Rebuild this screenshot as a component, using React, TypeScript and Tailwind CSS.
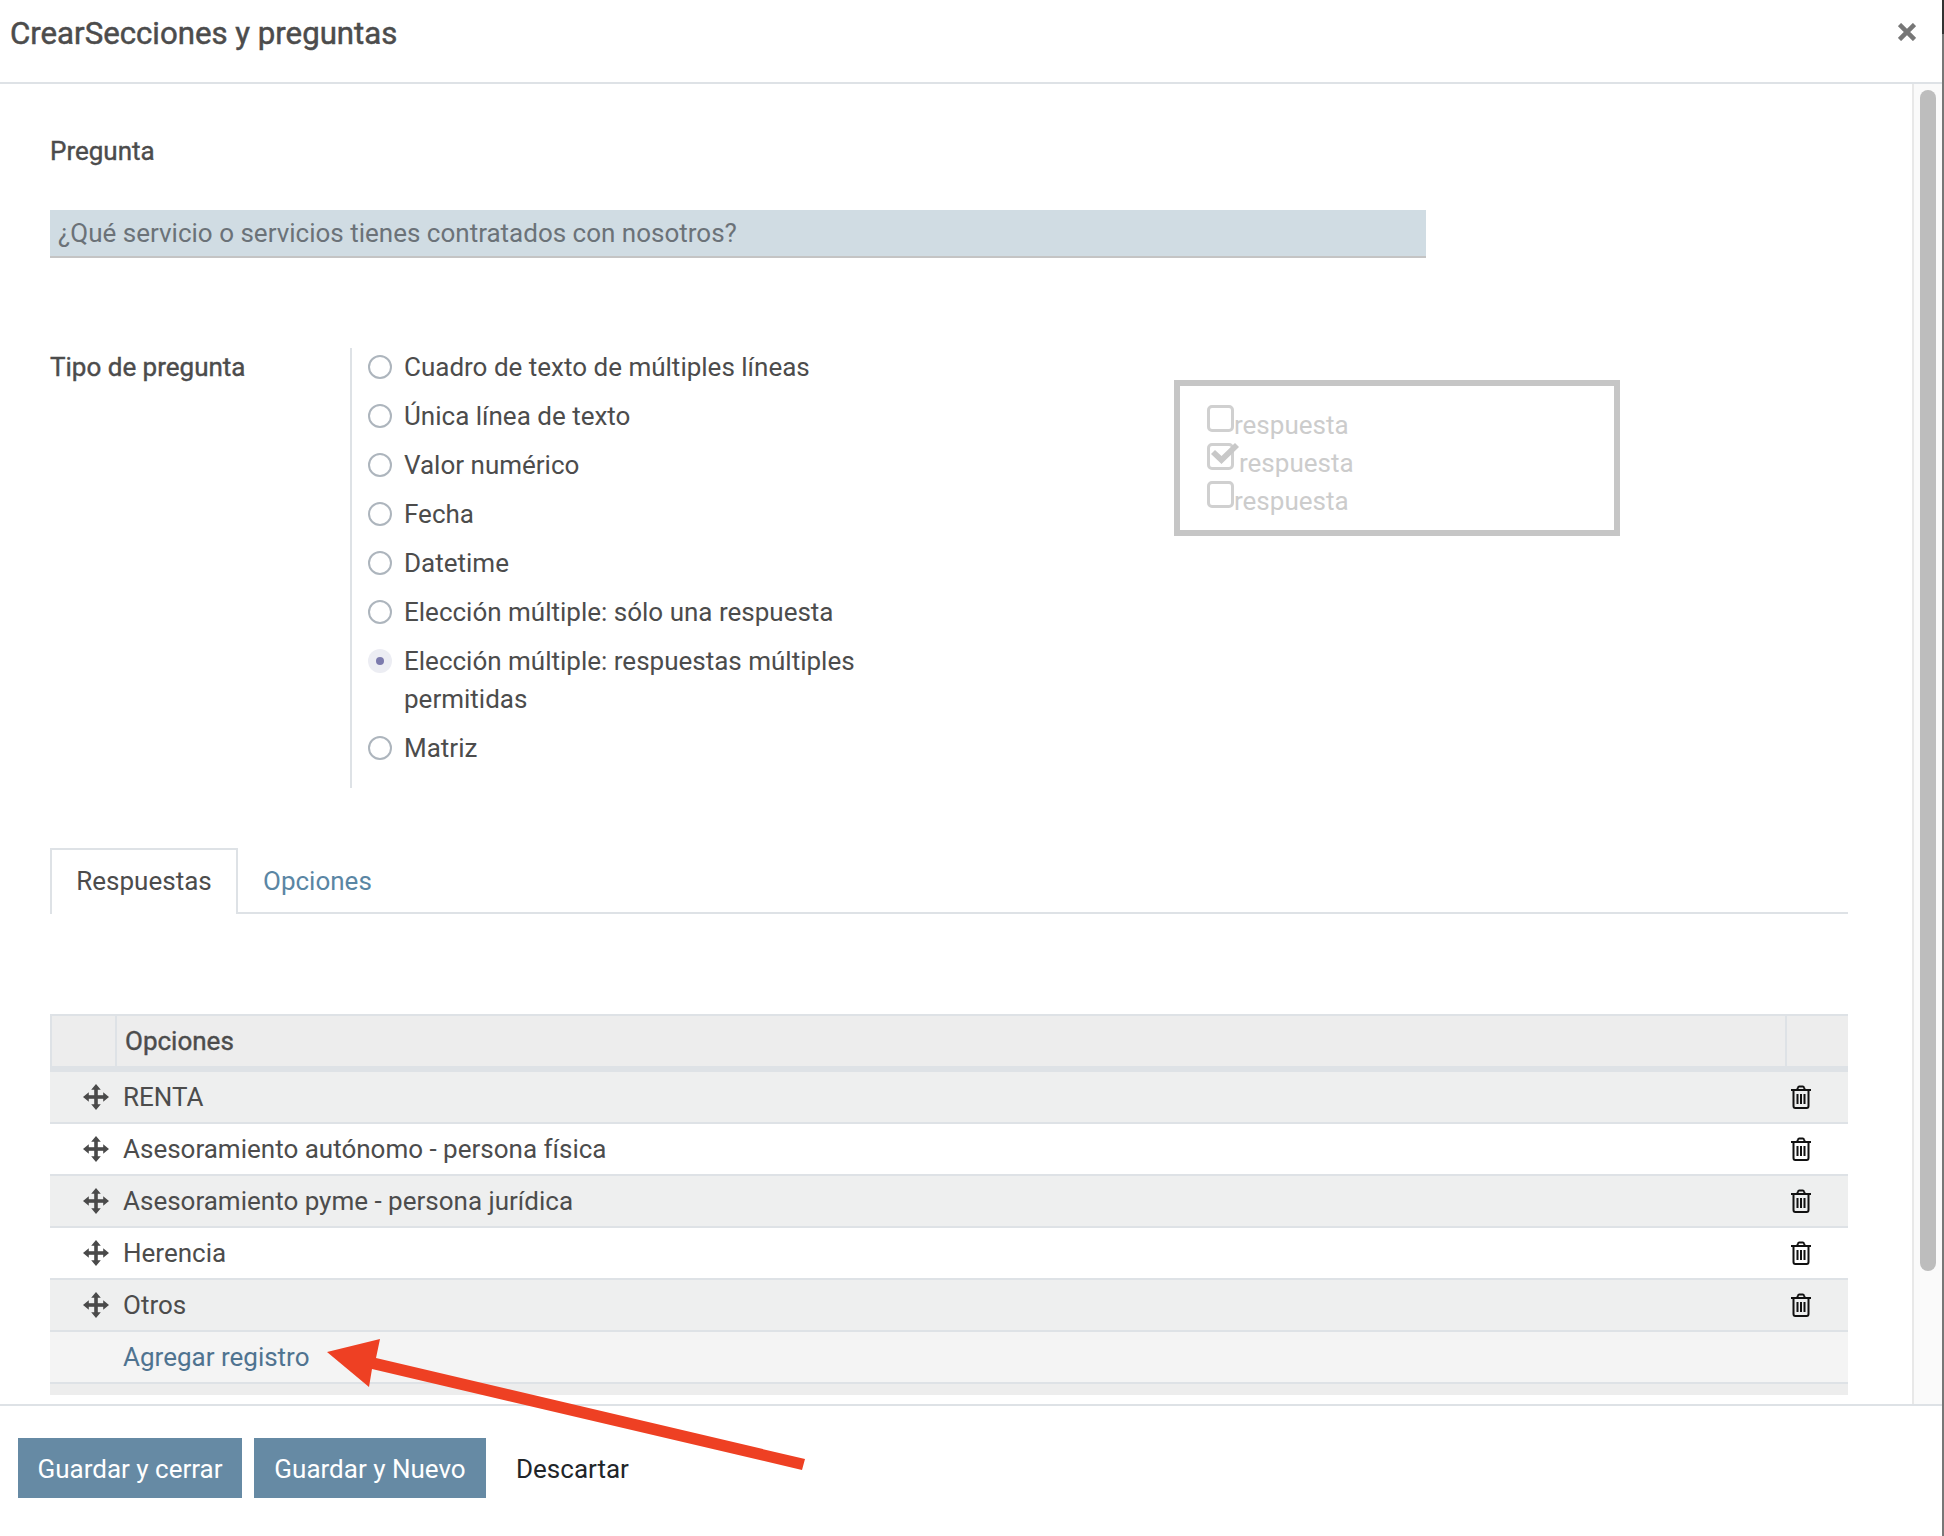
const tipos = [
  { label: "Cuadro de texto de múltiples líneas" },
  { label: "Única línea de texto" },
  { label: "Valor numérico" },
  { label: "Fecha" },
  { label: "Datetime" },
  { label: "Elección múltiple: sólo una respuesta" },
  { label: "Elección múltiple: respuestas múltiples permitidas", checked: true },
  { label: "Matriz" },
];

const opciones = [
  "RENTA",
  "Asesoramiento autónomo - persona física",
  "Asesoramiento pyme - persona jurídica",
  "Herencia",
  "Otros",
];

function MoveIcon() {
  return (
    <svg width="26" height="26" viewBox="0 0 26 26" fill="#4a4a4a">
      <path d="M11.200 5h3.600v16h-3.600z" />
      <path d="M5 11.200h16v3.600H5z" />
      <path d="M13 0l4.800 5.800H8.200zM13 26l-4.800-5.800h9.600zM0 13l5.800-4.800v9.600zM26 13l-5.800 4.800V8.200z" />
    </svg>
  );
}

function TrashIcon() {
  return (
    <svg width="22" height="24" viewBox="0 0 22 24" fill="none" stroke="#111" strokeWidth="2">
      <path d="M1 5h20" />
      <path d="M7 5l1-2.500c.2-.6.6-1 1.200-1h3.600c.6 0 1 .4 1.200 1L15 5" />
      <path d="M3.500 5v16c0 1.200.8 2 1.800 2h11.400c1 0 1.800-.8 1.800-2V5" />
      <path d="M7.500 9v10M11 9v10M14.500 9v10" />
    </svg>
  );
}

function Radio({ checked }: { checked?: boolean }) {
  if (checked) {
    return (
      <span className="flex h-6 w-6 shrink-0 items-center justify-center rounded-full bg-[#ecedf3]">
        <span className="h-2 w-2 rounded-full bg-[#7c7bad]"></span>
      </span>
    );
  }
  return <span className="h-6 w-6 shrink-0 rounded-full border-2 border-[#adb5bd] bg-white"></span>;
}

function PreviewBox({ checked }: { checked?: boolean }) {
  return (
    <div className="relative h-[27px] w-[27px] shrink-0 rounded-[5px] border-[3px] border-[#d0d0d0]">
      {checked && (
        <svg className="absolute -top-[4px] left-0" width="30" height="24" viewBox="0 0 30 24" fill="#c8c8c8">
          <path d="M1 12l4-4 6.500 6L25 1l4 4-17.500 17z" />
        </svg>
      )}
    </div>
  );
}

export default function App() {
  return (
    <div className="relative flex h-[1536px] w-[1944px] flex-col overflow-hidden bg-white font-['Roboto',sans-serif] text-[26px] leading-[38px] text-[#4c4c4c]">
      <div className="flex h-[84px] shrink-0 items-start justify-between border-b-2 border-[#dee2e6] pl-[10px] pr-[28px]">
        <h1 className="mt-[14px] text-[31.200px] leading-[40px] text-[#4c4c4c] [-webkit-text-stroke:0.5px_#4c4c4c]">CrearSecciones y preguntas</h1>
        <svg className="mt-[23px]" width="18" height="18" viewBox="0 0 18 18" stroke="#777" strokeWidth="4.500">
          <path d="M1.500 1.500l15 15M16.500 1.500l-15 15" />
        </svg>
      </div>

      <div className="flex min-h-0 flex-1">
        <div className="min-w-0 flex-1 overflow-hidden pl-[50px] pr-[64px] pt-[48px]">
          <div className="[-webkit-text-stroke:0.4px_#4c4c4c]">Pregunta</div>
          <input
            readOnly
            value="¿Qué servicio o servicios tienes contratados con nosotros?"
            className="mt-[40px] block h-[48px] w-[1376px] border-b-2 border-[#c4c4c4] bg-[#d0dce3] px-2 text-[#6b7278] outline-none"
          />

          <div className="mt-[90px] flex">
            <div className="w-[300px] shrink-0 [-webkit-text-stroke:0.4px_#4c4c4c]">Tipo de pregunta</div>
            <div className="h-[440px] w-[522px] shrink-0 border-l-2 border-[#dee2e6] pl-[16px]">
              {tipos.map((t) => (
                <div key={t.label} className="flex gap-[12px] pb-[11px]">
                  <span className="flex h-[38px] items-center">
                    <Radio checked={t.checked} />
                  </span>
                  <span>{t.label}</span>
                </div>
              ))}
            </div>
            <div className="ml-[302px] mt-[32px] h-[156px] w-[446px] border-[6px] border-[#c6c6c6] pl-[27px] pt-[19px] text-[#cccccc]">
              <div className="flex h-[38px]"><PreviewBox /><span className="mt-[1px]">respuesta</span></div>
              <div className="flex h-[38px]"><PreviewBox checked /><span className="ml-[5px] mt-[1px]">respuesta</span></div>
              <div className="flex h-[38px]"><PreviewBox /><span className="mt-[1px]">respuesta</span></div>
            </div>
          </div>

          <div className="mt-[60px] flex h-[66px] border-b-2 border-[#dee2e6]">
            <div className="-mb-[2px] flex h-[66px] w-[188px] items-center justify-center border-2 border-b-0 border-[#dee2e6] bg-white pb-[2px]">Respuestas</div>
            <div className="ml-[25px] flex items-center pt-[2px] text-[#5a86a4]">Opciones</div>
          </div>

          <div className="mt-[100px]">
            <div className="flex h-[58px] border-l-2 border-t-2 border-b-[6px] border-[#dee2e6] bg-[#ededed]">
              <div className="w-[65px] shrink-0 border-r-2 border-[#dee2e6]"></div>
              <div className="flex-1 pl-[8px] pt-[6px] [-webkit-text-stroke:0.4px_#4c4c4c]">Opciones</div>
              <div className="w-[63px] shrink-0 border-l-2 border-[#dee2e6]"></div>
            </div>
            {opciones.map((o, i) => (
              <div key={o} className={i % 2 === 0 ? "flex h-[52px] items-center border-b-2 border-[#dee2e6] bg-[#eeefef]" : "flex h-[52px] items-center border-b-2 border-[#dee2e6] bg-white"}>
                <span className="ml-[33px] flex w-[40px] shrink-0"><MoveIcon /></span>
                <span className="flex-1">{o}</span>
                <span className="mr-[36px] flex"><TrashIcon /></span>
              </div>
            ))}
            <div className="flex h-[52px] items-center border-b-2 border-[#dee2e6] bg-[#f4f4f4] pl-[73px] text-[#4f7390]">Agregar registro</div>
            <div className="h-[11px] bg-[#ededed]"></div>
          </div>
        </div>

        <div className="w-[32px] shrink-0 border-l-2 border-[#e8e8e8] bg-[#fafafa] pl-[6px] pt-[6px]">
          <div className="h-[1181px] w-[16px] rounded-full bg-[#bdbdbd]"></div>
        </div>
      </div>

      <div className="flex h-[132px] shrink-0 items-start border-t-2 border-[#dee2e6] pl-[18px] pt-[32px]">
        <button className="h-[60px] w-[224px] bg-[#668aa4] pt-[2px] text-white">Guardar y cerrar</button>
        <button className="ml-[12px] h-[60px] w-[232px] bg-[#668aa4] pt-[2px] text-white">Guardar y Nuevo</button>
        <button className="ml-[30px] h-[60px] pt-[2px] text-[#212529]">Descartar</button>
      </div>

      {/* flecha roja encima del pantallazo */}
      <svg className="pointer-events-none absolute left-0 top-0" width="1944" height="1536" viewBox="0 0 1944 1536" fill="#ee4023">
        <path d="M327 1352L380 1339L376 1358L805 1459L802 1470L372 1369L369 1387Z" />
      </svg>
      <div className="absolute right-0 top-0 h-full w-[2px] bg-[#777]"></div>
      <div className="absolute right-0 top-0 h-[34px] w-[2px] bg-[#333]"></div>
    </div>
  );
}
